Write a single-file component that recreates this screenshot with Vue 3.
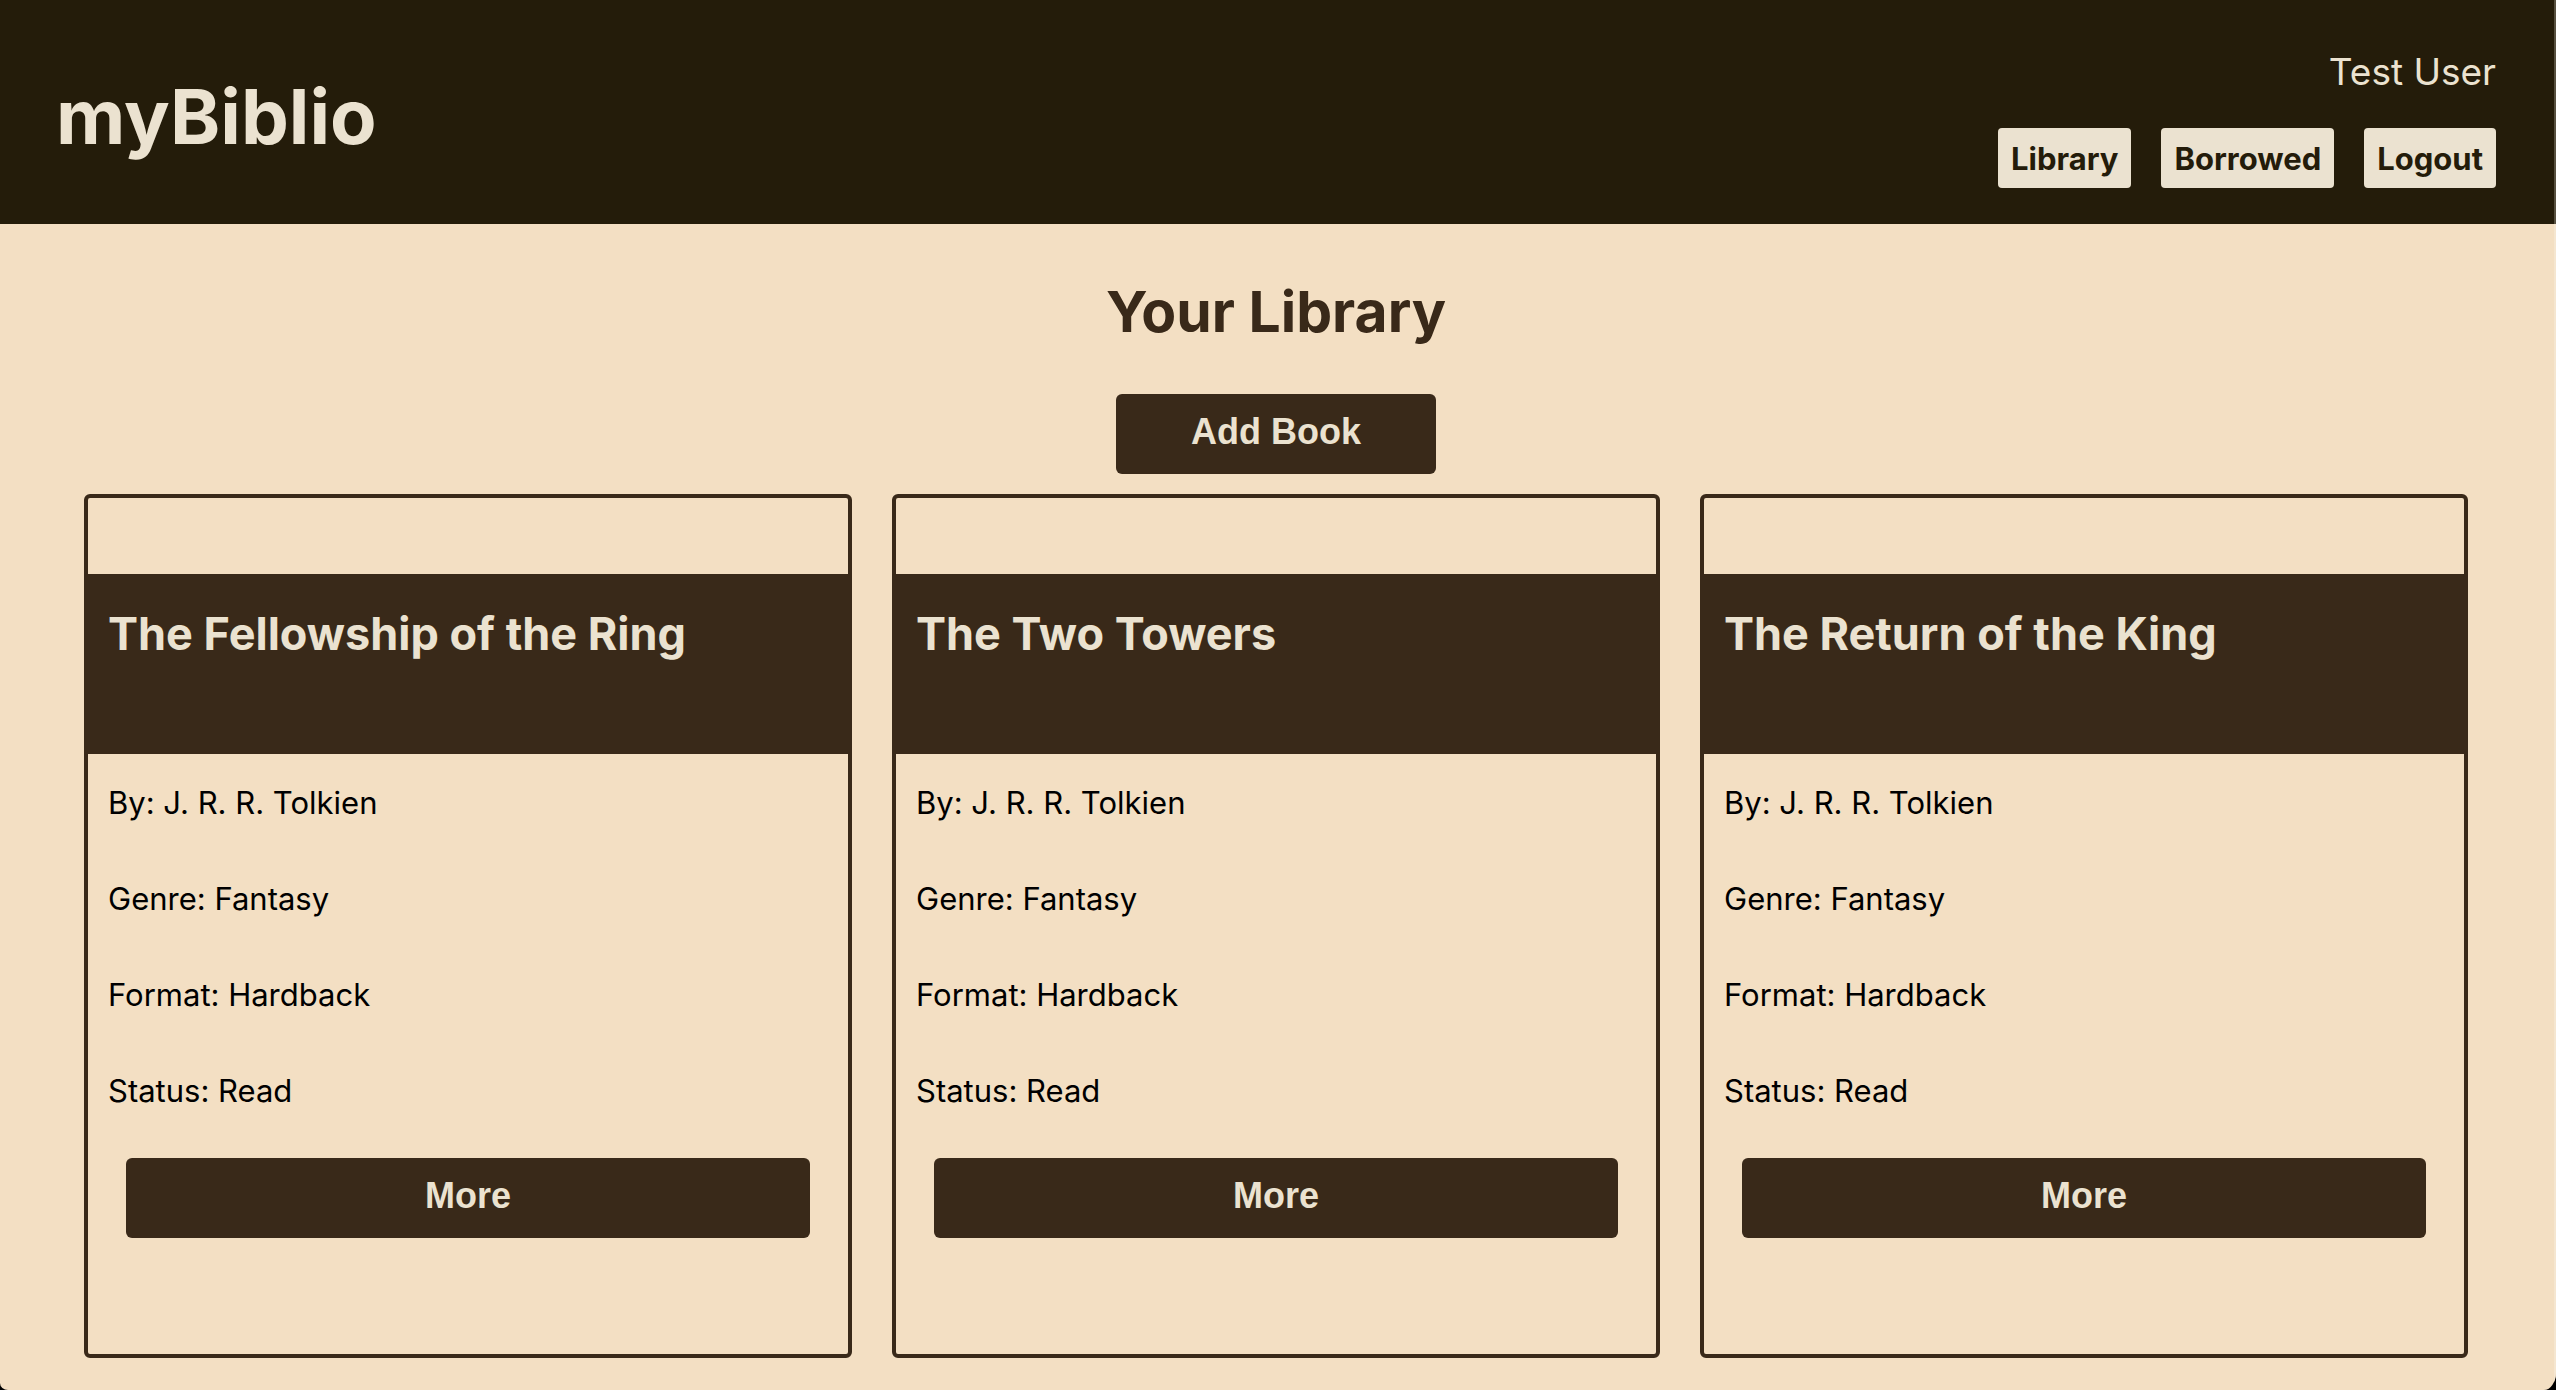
<script setup>
const books = [
  { id: 1, title: 'The Fellowship of the Ring', author: 'J. R. R. Tolkien', genre: 'Fantasy', format: 'Hardback', status: 'Read' },
  { id: 2, title: 'The Two Towers', author: 'J. R. R. Tolkien', genre: 'Fantasy', format: 'Hardback', status: 'Read' },
  { id: 3, title: 'The Return of the King', author: 'J. R. R. Tolkien', genre: 'Fantasy', format: 'Hardback', status: 'Read' },
]
</script>

<template>
  <div class="page">
    <header class="header">
      <h1 class="brand">myBiblio</h1>
      <div class="account">
        <p class="user">Test User</p>
        <nav class="nav">
          <a class="nav-link" href="#library">Library</a>
          <a class="nav-link" href="#borrowed">Borrowed</a>
          <a class="nav-link" href="#logout">Logout</a>
        </nav>
      </div>
    </header>
    <main class="main">
      <h2 class="heading">Your Library</h2>
      <button class="button add" type="button">Add Book</button>
      <section class="books">
        <article v-for="book in books" :key="book.id" class="card">
          <h3 class="title">{{ book.title }}</h3>
          <div class="details">
            <p class="detail">By: {{ book.author }}</p>
            <p class="detail">Genre: {{ book.genre }}</p>
            <p class="detail">Format: {{ book.format }}</p>
            <p class="detail">Status: {{ book.status }}</p>
          </div>
          <button class="button more" type="button">More</button>
        </article>
      </section>
    </main>
  </div>
</template>

<style>
html {
  background: #000000;
}
body {
  margin: 0;
}
</style>

<style scoped>
.page {
  box-sizing: border-box;
  min-height: 100vh;
  overflow: hidden;
  border-radius: 0 0 12px 8px / 0 0 18px 7px;
  background: #f3dfc3;
  color: #000000;
  font-family: Inter, "Liberation Sans", sans-serif;
}
.header {
  box-sizing: border-box;
  display: flex;
  justify-content: space-between;
  align-items: center;
  min-height: 224px;
  padding: 36px 58px 36px 56px;
  border-right: 2px solid #575040;
  background: #241c0a;
  color: #ebe2d0;
}
.brand {
  margin: 0;
  padding-top: 8px;
  font-size: 76px;
  line-height: 96px;
  font-weight: 700;
}
.account {
  display: flex;
  flex-direction: column;
  align-items: flex-end;
  gap: 20px;
}
.user {
  margin: 0;
  font-size: 37px;
  line-height: 72px;
}
.nav {
  display: flex;
  gap: 30px;
}
.nav-link {
  padding: 2px 13px 0;
  border-radius: 4px;
  background: #ebe2d0;
  color: #241c0a;
  font-size: 31px;
  line-height: 58px;
  font-weight: 700;
  text-decoration: none;
}
.main {
  display: flex;
  flex-direction: column;
  align-items: center;
  padding: 50px 86px 32px 84px;
  border-right: 2px solid #f5e6d0;
}
.heading {
  margin: 0 0 44px;
  color: #392919;
  font-size: 57px;
  line-height: 76px;
  font-weight: 700;
}
.button {
  height: 80px;
  padding: 0 0 4px;
  border: 0;
  border-radius: 6px;
  background: #392919;
  color: #ebe2d0;
  font-family: "Liberation Sans", Arial, sans-serif;
  font-size: 36px;
  font-weight: 700;
  cursor: pointer;
}
.add {
  width: 320px;
}
.books {
  display: grid;
  grid-template-columns: repeat(3, 1fr);
  gap: 40px;
  width: 100%;
  margin-top: 20px;
}
.card {
  display: flex;
  flex-direction: column;
  padding: 76px 0 116px;
  border: 4px solid #392919;
  border-radius: 6px;
}
.title {
  box-sizing: border-box;
  min-height: 180px;
  margin: 0;
  padding: 30px 20px;
  background: #392919;
  color: #ebe2d0;
  font-size: 45px;
  line-height: 60px;
  font-weight: 700;
}
.details {
  padding: 1px 20px 19px;
}
.detail {
  margin: 0;
  font-size: 31px;
  line-height: 96px;
}
.more {
  width: 90%;
  margin: 0 auto;
}
</style>
